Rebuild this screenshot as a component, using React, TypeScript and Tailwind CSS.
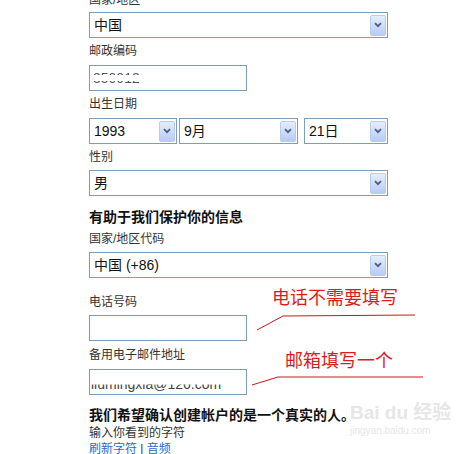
import React from "react";

const font = "font-['Liberation_Sans','Noto_Sans_CJK_SC',sans-serif]";

const Arrow = () => (
  <div className="flex h-[21px] w-[16px] items-center justify-center rounded-[2px] border border-[#b8ccf2] bg-gradient-to-b from-[#e6eefd] to-[#b6cbf4]">
    <svg width="8" height="6" viewBox="0 0 8 6">
      <path d="M1 1.2 L4 4.2 L7 1.2" fill="none" stroke="#4b5f82" strokeWidth="1.8" />
    </svg>
  </div>
);

const Select = ({ value, className = "" }: { value: string; className?: string }) => (
  <div
    className={`flex h-[26px] items-center justify-between border border-[#7f9db9] bg-white pl-[4px] pr-[1px] ${className}`}
  >
    <span className="text-[14px] leading-4 text-[#111]">{value}</span>
    <Arrow />
  </div>
);

const Label = ({ text, className = "" }: { text: string; className?: string }) => (
  <div className={`text-[12px] leading-4 text-[#333] ${className}`}>{text}</div>
);

export default function App() {
  return (
    <div className={`relative h-[454px] w-[457px] overflow-hidden bg-white ${font}`}>
      <div className="-mt-[8px] w-[299px] pl-[89px] box-content">
        <Label text="国家/地区" />
        <Select value="中国" className="mt-[4px]" />

        <Label text="邮政编码" className="mt-[5px]" />
        <div className="mt-[6px] flex h-[26px] w-[158px] items-center border border-[#7f9db9] pl-[3px]">
          <span className="text-[14px] leading-4 text-[#555] [mask-image:linear-gradient(to_bottom,black_32%,transparent_32%,transparent_68%,black_68%)]">
            350012
          </span>
        </div>

        <Label text="出生日期" className="mt-[5px]" />
        <div className="mt-[6px] flex">
          <Select value="1993" className="w-[88px]" />
          <Select value="9月" className="ml-[2px] w-[119px]" />
          <Select value="21日" className="ml-[6px] w-[84px]" />
        </div>

        <Label text="性别" className="mt-[5px]" />
        <Select value="男" className="mt-[5px]" />

        <div className="mt-[11px] text-[14px] font-bold leading-5 text-[#111]">有助于我们保护你的信息</div>
        <Label text="国家/地区代码" className="mt-[4px]" />
        <Select value="中国 (+86)" className="mt-[5px]" />

        <Label text="电话号码" className="mt-[16px]" />
        <div className="mt-[5px] h-[26px] w-[158px] border border-[#7f9db9]" />

        <Label text="备用电子邮件地址" className="mt-[6px]" />
        <div className="mt-[6px] flex h-[26px] w-[158px] items-center border border-[#7f9db9] pl-[1px]">
          <span className="pt-[4px] text-[14px] leading-4 text-[#444] [clip-path:inset(62%_0_0_0)]">
            liumingxia@126.com
          </span>
        </div>

        <div className="mt-[11px] text-[14px] font-bold leading-[18px] text-[#111]">
          我们希望确认创建帐户的是一个真实的人。
        </div>
        <Label text="输入你看到的字符" className="mt-[1px]" />
        <div className="text-[12px] leading-4">
          <span className="text-[#2f67c5]">刷新字符</span>
          <span className="text-[#333]"> | </span>
          <span className="text-[#2f67c5]">音频</span>
        </div>
      </div>

      {/* red annotations */}
      <div className="absolute left-[272px] top-[288px] text-[18px] leading-5 text-[#d91c1c]">电话不需要填写</div>
      <div className="absolute left-[285px] top-[351px] text-[18px] leading-5 text-[#d91c1c]">邮箱填写一个</div>
      <svg className="absolute left-0 top-0" width="457" height="454">
        <polyline points="257,330 283,316 415,315" fill="none" stroke="#c8161a" strokeWidth="1" />
        <polyline points="252,385 278,377 423,377" fill="none" stroke="#c8161a" strokeWidth="1" />
      </svg>

      {/* watermark */}
      <div className="pointer-events-none absolute left-[350px] top-[401px] text-[#e6e6e6]">
        <div className="text-[19px] font-bold leading-6">Bai du 经验</div>
        <div className="text-[10px] leading-3">jingyan.baidu.com</div>
      </div>
    </div>
  );
}
